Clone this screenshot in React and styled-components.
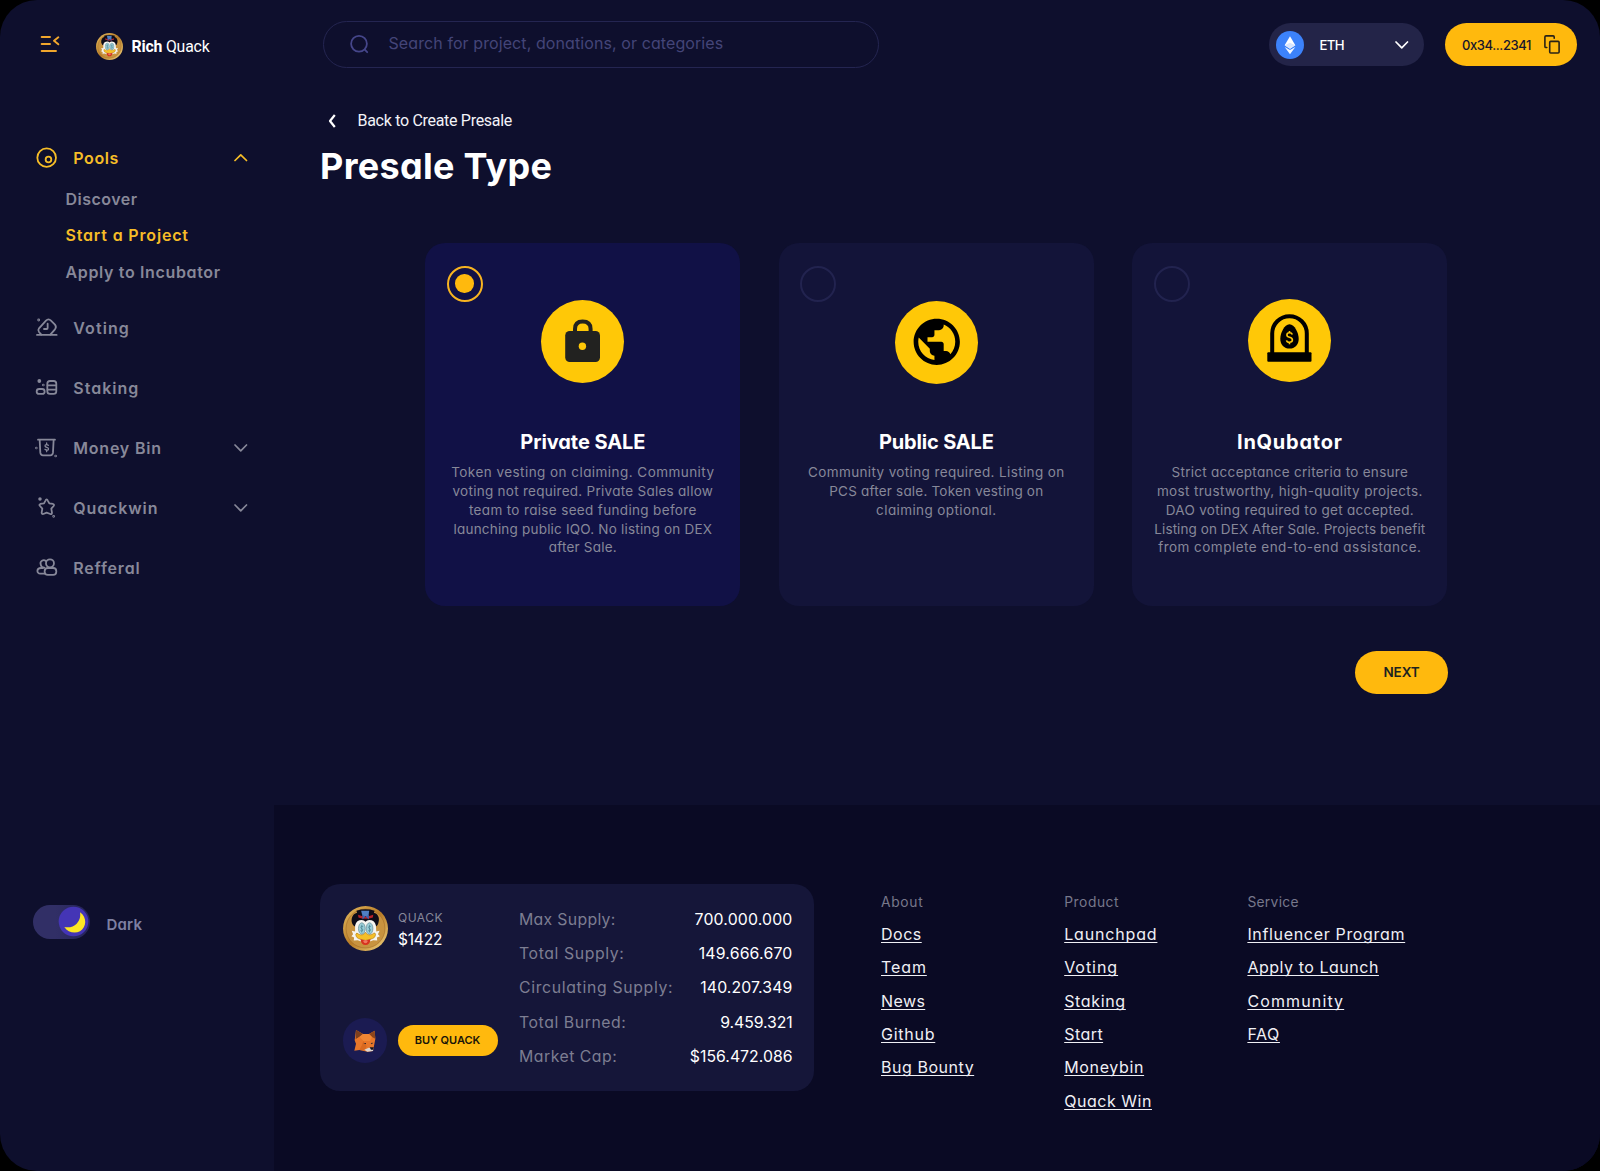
import React from "react";
import styled, { createGlobalStyle, css } from "styled-components";
import { MdPublic } from "react-icons/md";

const color = {
  page: "#0e0f2d",
  footer: "#0a0a24",
  card: "#131439",
  cardActive: "#111146",
  panel: "#151639",
  gold: "#ffb90d",
  badge: "#ffc807",
  navGold: "#f6bd27",
  muted: "#878899",
  line: "#242551",
};

const Global = createGlobalStyle`
  * { box-sizing: border-box; }
  body {
    margin: 0;
    background: #000;
    font-family: Inter, "Liberation Sans", sans-serif;
    font-feature-settings: "cv11";
  }
  svg { display: block; flex: none; }
`;

const tracked = css`
  letter-spacing: ${(p) => p.$track || 0}px;
  white-space: nowrap;
`;

const Page = styled.div`
  display: grid;
  grid-template-columns: 273.5px 1fr;
  width: 1600px;
  height: 1171px;
  overflow: hidden;
  border-radius: 37px;
  background: ${color.page};
`;

/* ---------- Sidebar ---------- */

const Sidebar = styled.aside`
  display: flex;
  flex-direction: column;
`;

const Brand = styled.div`
  display: flex;
  align-items: center;
  height: 92px;
  padding-left: 39px;
`;

const BrandLogo = styled.div`
  display: flex;
  align-items: center;
  gap: 9px;
  margin-left: 34.5px;
`;

const BrandName = styled.span`
  padding-top: 2px;
  font: 400 15.8px/20px Roboto, sans-serif;
  color: #fff;
  ${tracked}
  b { font-weight: 700; }
`;

const MenuIconBox = styled.div`
  margin-top: -4px;
`;

const Nav = styled.nav`
  display: flex;
  flex-direction: column;
  padding-top: 43.5px;
`;

const NavItem = styled.a`
  display: flex;
  align-items: center;
  height: ${(p) => (p.$open ? 44.5 : 60)}px;
  padding: 0 26px 0 35px;
  color: ${(p) => (p.$open ? color.navGold : color.muted)};
`;

const NavLabel = styled.span`
  flex: 1;
  margin-left: 15px;
  font-size: 16px;
  font-weight: 600;
  ${tracked}
`;

const SubMenu = styled.div`
  display: flex;
  flex-direction: column;
  padding: 0.5px 0 6.75px 65.5px;
`;

const SubItem = styled.a`
  font-size: 16px;
  font-weight: 600;
  line-height: 36.75px;
  color: ${(p) => (p.$active ? color.navGold : color.muted)};
  ${tracked}
`;

const ThemeRow = styled.div`
  display: flex;
  align-items: center;
  gap: 16.5px;
  margin-top: 307px;
  padding-left: 33px;
`;

const Toggle = styled.div`
  display: flex;
  align-items: center;
  justify-content: flex-end;
  width: 57px;
  height: 34px;
  padding-right: 1px;
  border-radius: 17px;
  background: linear-gradient(90deg, #312f66 40%, #24235a);
`;

const ThemeLabel = styled.span`
  padding-top: 6px;
  font-size: 15px;
  font-weight: 600;
  color: #7e80a2;
  ${tracked}
`;

/* ---------- Main ---------- */

const Main = styled.main`
  display: grid;
  grid-template-rows: 89px 715.5px 1fr;
  min-width: 0;
`;

const TopBar = styled.header`
  display: flex;
  align-items: center;
  padding: 0 23px 0 49.5px;
`;

const Search = styled.div`
  display: flex;
  align-items: center;
  width: 556px;
  height: 47px;
  padding: 0 0 1px 25.5px;
  border: 1px solid ${color.line};
  border-radius: 24px;
`;

const SearchHint = styled.span`
  margin-left: 20px;
  padding-bottom: 2px;
  font-size: 16px;
  color: #444578;
  ${tracked}
`;

const Network = styled.div`
  display: flex;
  align-items: center;
  width: 155px;
  height: 43px;
  margin-left: auto;
  padding: 0 15px 0 7px;
  border-radius: 22px;
  background: #232448;
  color: #fff;
`;

const NetworkName = styled.span`
  flex: 1;
  margin-left: 16px;
  padding-top: 1px;
  font-size: 13.2px;
  font-weight: 500;
  color: #fff;
  ${tracked}
`;

const Wallet = styled.div`
  display: flex;
  align-items: center;
  justify-content: space-between;
  width: 132px;
  height: 43px;
  margin-left: 21.500px;
  padding: 0 17px 0 17px;
  border-radius: 22px;
  background: ${color.gold};
  font-size: 13px;
  font-weight: 500;
  color: #17152c;
  ${tracked}
`;

const Content = styled.section`
  display: flex;
  flex-direction: column;
  padding: 20px 152px 0 46px;
`;

const BackLink = styled.a`
  display: flex;
  align-items: center;
  gap: 21.5px;
  height: 24px;
  padding-left: 8.5px;
  font: 400 16px/24px Roboto, sans-serif;
  color: #f3f3f8;
  ${tracked}
`;

const Title = styled.h1`
  margin: 11px 0 0 0.5px;
  font-size: 36px;
  font-weight: 700;
  line-height: 44px;
  color: #fff;
  ${tracked}
`;

const Cards = styled.div`
  display: grid;
  grid-template-columns: repeat(3, 315.3px);
  gap: 38.2px;
  margin: 55px 0 0 105.7px;
`;

const Card = styled.article`
  height: 363px;
  border-radius: 20px;
  background: ${(p) => (p.$active ? color.cardActive : color.card)};
`;

const CardTop = styled.div`
  display: grid;
  grid-template-columns: 1fr auto 1fr;
  align-items: start;
  height: 184px;
  padding: 0 22px;
`;

const Radio = styled.span`
  display: grid;
  place-items: center;
  width: 36px;
  height: 36px;
  margin: 22.500px 0 0 -0.5px;
  border: ${(p) => (p.$active ? "2.5px solid #f8b420" : "2px solid #22234f")};
  border-radius: 50%;

  &::after {
    content: "";
    width: 18.5px;
    height: 18.5px;
    border-radius: 50%;
    background: ${(p) => (p.$active ? color.gold : "transparent")};
  }
`;

const Badge = styled.div`
  display: grid;
  place-items: center;
  width: 83px;
  height: 83px;
  margin-top: ${(p) => p.$top}px;
  border-radius: 50%;
  background: ${color.badge};
  color: #000;
`;

const CardTitle = styled.h2`
  margin: 0;
  font-size: 20px;
  font-weight: 700;
  line-height: 30px;
  text-align: center;
  color: #fff;
  ${tracked}
`;

const CardText = styled.p`
  display: flex;
  flex-direction: column;
  align-items: center;
  margin: 6px 0 0;
  font-size: 13.5px;
  line-height: 18.85px;
  color: ${color.muted};
`;

const TextLine = styled.span`
  ${tracked}
`;

const NextButton = styled.button`
  align-self: flex-end;
  width: 93px;
  height: 43px;
  margin-top: 44.500px;
  padding: 0;
  border: 0;
  border-radius: 22px;
  background: ${color.gold};
  font: 600 13.5px Inter, sans-serif;
  color: #1c2320;
  ${tracked}
`;

/* ---------- Footer ---------- */

const Footer = styled.footer`
  display: flex;
  align-items: flex-start;
  padding: 79px 0 0 46.5px;
  background: ${color.footer};
`;

const TokenPanel = styled.div`
  display: flex;
  gap: 21.5px;
  width: 494px;
  height: 207.5px;
  padding: 19px 21.5px 0 22.500px;
  border-radius: 20px;
  background: ${color.panel};
`;

const TokenSide = styled.div`
  display: flex;
  flex-direction: column;
  justify-content: space-between;
  width: 155px;
  height: 160px;
  padding-top: 3px;
`;

const TokenRow = styled.div`
  display: flex;
  align-items: center;
  gap: 10.5px;
`;

const TokenInfo = styled.div`
  display: flex;
  flex-direction: column;
  padding-top: 1px;
  line-height: 22.6px;
`;

const TokenName = styled.span`
  font-size: 12px;
  color: ${color.muted};
  ${tracked}
`;

const TokenPrice = styled.span`
  font-size: 15.5px;
  color: #fff;
  ${tracked}
`;

const FoxCircle = styled.div`
  display: grid;
  place-items: center;
  width: 44.500px;
  height: 44.500px;
  border-radius: 50%;
  background: #1b1b52;
`;

const BuyButton = styled.button`
  width: 100px;
  height: 31px;
  padding: 0;
  border: 0;
  border-radius: 16px;
  background: ${color.gold};
  font: 600 11px Inter, sans-serif;
  color: #1a1508;
  ${tracked}
`;

const Stats = styled.dl`
  flex: 1;
  margin: 0;
`;

const StatRow = styled.div`
  display: flex;
  justify-content: space-between;
  font-size: 15.8px;
  line-height: 34.45px;
`;

const StatName = styled.dt`
  color: #7d7e92;
  ${tracked}
`;

const StatValue = styled.dd`
  margin: 0;
  color: #fff;
  ${tracked}
`;

const Columns = styled.div`
  display: grid;
  grid-template-columns: repeat(3, 183.2px);
  margin-left: 67px;
  padding-top: 6px;
`;

const Column = styled.div`
  display: flex;
  flex-direction: column;
  align-items: flex-start;
`;

const ColumnTitle = styled.h3`
  margin: 0 0 4.500px;
  font-size: 13.8px;
  font-weight: 400;
  line-height: 24px;
  color: #77788b;
  ${tracked}
`;

const FooterLink = styled.a`
  font-size: 16px;
  line-height: 33.35px;
  color: #f0f0f5;
  text-decoration: underline;
  text-decoration-thickness: 1px;
  text-decoration-skip-ink: none;
  text-underline-offset: 1.5px;
  ${tracked}
`;

/* ---------- Drawings ---------- */

const navIcons = {
  pools: (
    <>
      <circle cx="35" cy="35" r="28" />
      <circle cx="40.5" cy="40.5" r="8.5" />
    </>
  ),
  voting: (
    <>
      <path d="M19 56L12 48C9 44 9 41 12 37L33 14C38 9 43 9 48 14L60 26C64 31 64 35 60 40L46 56" />
      <path d="M38 23V36Q38 39 35 39H27" />
      <path d="M6 57H65" />
      <circle cx="11" cy="12" r="1.5" />
    </>
  ),
  staking: (
    <>
      <rect x="37" y="15" width="27" height="39" rx="8" />
      <path d="M38 28H63M38 41H63" />
      <rect x="5" y="39" width="24" height="15" rx="7.5" />
      <circle cx="13" cy="15" r="3" />
      <circle cx="25" cy="27" r="1.2" />
    </>
  ),
  moneybin: (
    <>
      <path d="M9 11H60M14 12L16 50Q17 58 24 58H46Q53 58 54 50L56 12" />
      <path d="M40 28Q35 24 31 27Q28 32 35 34Q42 36 40 41Q35 45 30 40M35 21V26M35 42V47" strokeWidth="3.8" />
      <circle cx="4" cy="36" r="1" />
      <circle cx="62" cy="60" r="1.2" />
    </>
  ),
  quackwin: (
    <>
      <path d="M35 10Q37 10 38 13L43 22L54 24Q59 26 56 30L49 38L51 50Q51 56 46 54L35 50L25 54Q20 55 20 50L22 38L15 30Q11 26 16 24L27 22L32 13Q33 10 35 10Z" />
      <circle cx="15" cy="9" r="2.6" />
      <circle cx="56" cy="61" r="1.4" />
    </>
  ),
  referral: (
    <>
      <path d="M33 15C25 9 14 15 17 25C18 31 22 35 28 35" />
      <circle cx="45" cy="22" r="12" />
      <rect x="29" y="36" width="35" height="21" rx="9.5" />
      <path d="M24 36H18C4 36 4 53 16 53H29" />
    </>
  ),
};

const NavIcon = ({ name }) => (
  <svg width="23.3" height="23.3" viewBox="0 0 70 70" fill="none" stroke="currentColor" strokeWidth="5.4" strokeLinecap="round" strokeLinejoin="round">
    {navIcons[name]}
  </svg>
);

const Chevron = ({ up }) => (
  <svg width="13.500" height="10" viewBox="0 0 13.5 10" fill="none" stroke="currentColor" strokeWidth="1.7" strokeLinecap="round" strokeLinejoin="round">
    <path d={up ? "M1 7.500L6.75 1.800L12.500 7.500" : "M1 2L6.75 7.800L12.500 2"} />
  </svg>
);

const MenuIcon = () => (
  <svg width="22" height="20" viewBox="0 0 66 60" fill="none" stroke="#f0a62c" strokeWidth="5.800" strokeLinecap="round" strokeLinejoin="round">
    <path d="M8 9H33M8 30H33M8 51H51M58 10L45 20.500L58 31" />
  </svg>
);

const SearchIcon = () => (
  <svg width="19" height="19" viewBox="0 0 19 19" fill="none" stroke="#45468a" strokeWidth="1.8" strokeLinecap="round">
    <circle cx="9" cy="8.8" r="7.9" />
    <path d="M14.8 14.7L17.2 17.2" />
  </svg>
);

const EthIcon = () => (
  <svg width="28" height="28" viewBox="0 0 84 84">
    <circle cx="42" cy="42" r="42" fill="#3c82fa" />
    <path d="M42 16L58 43L42 53L26 43Z" fill="#fff" />
    <path d="M42 35L58 43L42 53L26 43Z" fill="#d9e6fe" />
    <path d="M26 48L42 57L58 48L42 70Z" fill="#f2f7ff" />
  </svg>
);

const CopyIcon = () => (
  <svg width="16" height="19" viewBox="0 0 16 19" fill="none" stroke="#2a2316" strokeWidth="1.6" strokeLinecap="round" strokeLinejoin="round">
    <rect x="5.7" y="6.4" width="9.4" height="11.6" rx="1" />
    <path d="M10.2 3.2V2Q10.2 .9 9.1 .9H2Q.9 .9 .9 2V11.4Q.9 12.5 2 12.5H2.8" />
  </svg>
);

const BackIcon = () => (
  <svg width="8" height="14" viewBox="0 0 8 14" fill="none" stroke="#fff" strokeWidth="2.2" strokeLinejoin="round">
    <path d="M6.800 1L2 7L6.800 13" />
  </svg>
);

const LockIcon = () => (
  <svg width="83" height="83" viewBox="0 0 83 83">
    <rect x="24.2" y="31" width="34.8" height="31" rx="4.5" fill="#222220" />
    <path d="M34 32V29Q34 21.5 41.6 21.5Q49.6 21.5 49.6 29V32" fill="none" stroke="#222220" strokeWidth="4" />
    <circle cx="41.4" cy="46.2" r="3.7" fill="#ffc807" />
  </svg>
);

const IncubatorIcon = () => (
  <svg width="83" height="83" viewBox="0 0 83 83">
    <path d="M24.2 55V34.5A17.3 17.3 0 0 1 58.8 34.5V55" fill="none" stroke="#000" strokeWidth="4" />
    <rect x="19.3" y="53.3" width="44.2" height="9.4" rx="1" />
    <path d="M41.5 25.2C46.6 25.2 50.7 34 50.7 39.8C50.7 46 46.8 49.6 41.5 49.6C36.2 49.6 32.3 46 32.3 39.8C32.3 34 36.4 25.2 41.5 25.2Z" />
    <path d="M44.3 35.4Q43.8 33.8 41.5 33.8Q38.9 33.8 38.9 36Q38.9 37.7 41.5 38.3Q44.4 39 44.4 41Q44.4 43.2 41.5 43.2Q38.9 43.2 38.5 41.3M41.5 32V34M41.5 43V45.2" fill="none" stroke="#ffc807" strokeWidth="1.6" />
  </svg>
);

const MoonKnob = () => (
  <svg width="31" height="31" viewBox="0 0 93 93">
    <circle cx="46.5" cy="46.5" r="44.5" fill="#4435b6" />
    <path d="M66 19C88 34 86 64 66 76C50 84 29 79 19 63C34 66 47 62 56 53C66 43 68 31 66 19Z" fill="#fde725" />
  </svg>
);

const DuckCoin = ({ size, id }) => (
  <svg width={size} height={size} viewBox="0 0 134 134">
    <defs>
      <linearGradient id={id} x1="0" y1="0" x2="1" y2="1">
        <stop offset="0" stopColor="#e6bd62" />
        <stop offset=".5" stopColor="#b87c26" />
        <stop offset="1" stopColor="#f4d682" />
      </linearGradient>
    </defs>
    <circle cx="67" cy="67" r="67" fill={`url(#${id})`} />
    <circle cx="67" cy="67" r="58" fill="#c8933f" stroke="#9a6524" strokeWidth="1.500" />
    <path d="M26 48C24 32 32 22 42 20L40 14Q67 6 94 14L92 20C103 22 110 34 106 48Q104 62 93 62H41Q29 62 26 48Z" fill="#0d0c18" />
    <path d="M54 14H78L76 30H58Z" fill="#4f7fc4" />
    <path d="M45 26Q67 36 90 26L89 34Q67 42 46 34Z" fill="#b5232b" />
    <path d="M67 31L58 26V40ZM67 31L77 26V40Z" fill="#3f63ad" />
    <path d="M36 58Q40 42 56 42Q63 42 67 47Q71 42 78 42Q94 42 98 58L99 76L109 74L104 84L110 90L101 94L102 103L90 102L67 110L44 102L32 103L33 94L25 90L30 84L26 74L36 76Z" fill="#f6f5f0" />
    <ellipse cx="56" cy="67" rx="10" ry="17" fill="#9ccfd8" stroke="#5e8792" strokeWidth="2" />
    <ellipse cx="79" cy="67" rx="10" ry="17" fill="#9ccfd8" stroke="#5e8792" strokeWidth="2" />
    <path d="M60 61Q53 58 53 64Q54 67 57 68Q61 71 58 74Q55 76 52 73M56 56V79M83 61Q76 58 76 64Q77 67 80 68Q84 71 81 74Q78 76 75 73M79 56V79" fill="none" stroke="#3f7a88" strokeWidth="1.800" />
    <path d="M38 84Q40 77 47 84Q60 90 67 78Q74 90 87 84Q95 77 97 84Q97 96 82 99Q67 106 52 99Q38 96 38 84Z" fill="#f5bf27" stroke="#9a6710" strokeWidth="1.5" />
    <path d="M52 98Q67 105 82 98Q80 116 67 116Q54 116 52 98Z" fill="#d7331f" />
    <path d="M60 104Q67 99 74 104Q72 111 67 111Q62 111 60 104Z" fill="#f07860" />
  </svg>
);

const FoxIcon = () => (
  <svg width="22" height="23" viewBox="0 0 66 69">
    <path d="M6 3L27 15H45L62 5L64 30L61 46L57 66L40 68L16 63L1 65L6 44L2 34Z" fill="#e8772a" />
    <path d="M6 3L27 15L16 24L5 31Z" fill="#7d3f1c" />
    <path d="M62 5L45 15L54 24L64 29Z" fill="#8c451c" />
    <path d="M27 15H45L54 24L48 36H28L16 24Z" fill="#f08734" />
    <path d="M5 31L16 24L28 36L24 48L6 44Z" fill="#e8772a" />
    <path d="M24 48L28 36L38 52L32 64L16 63Z" fill="#d9691f" />
    <path d="M28 42L36 42L36 46Z" fill="#292732" />
    <path d="M50 42L58 41L53 46Z" fill="#292732" />
    <path d="M31 62L44 56L58 57L57 66L40 68Z" fill="#ddd4cf" />
    <path d="M47 55H59L58 62H51Z" fill="#17151f" />
  </svg>
);

/* ---------- Data ---------- */

const navItems = [
  { icon: "voting", label: "Voting", track: 1.08 },
  { icon: "staking", label: "Staking", track: 1 },
  { icon: "moneybin", label: "Money Bin", track: 0.78, more: true },
  { icon: "quackwin", label: "Quackwin", track: 0.88, more: true },
  { icon: "referral", label: "Refferal", track: 0.8 },
];

const saleTypes = [
  {
    title: "Private SALE", track: -0.06, active: true, top: 56.6, icon: <LockIcon />,
    lines: [
      ["Token vesting on claiming. Community", 0.45],
      ["voting not required. Private Sales allow", 0.27],
      ["team to raise seed funding before", 0.34],
      ["launching public IQO. No listing on DEX", 0.2],
      ["after Sale.", 0.2],
    ],
  },
  {
    title: "Public SALE", track: -0.17, top: 57.6, icon: <MdPublic size={55.5} />,
    lines: [
      ["Community voting required. Listing on", 0.37],
      ["PCS after sale. Token vesting on", 0.2],
      ["claiming optional.", 0.4],
    ],
  },
  {
    title: "InQubator", track: 0.75, top: 55.6, icon: <IncubatorIcon />,
    lines: [
      ["Strict acceptance criteria to ensure", 0.29],
      ["most trustworthy, high-quality projects.", 0.35],
      ["DAO voting required to get accepted.", 0.31],
      ["Listing on DEX After Sale. Projects benefit", 0.08],
      ["from complete end-to-end assistance.", 0.47],
    ],
  },
];

const stats = [
  ["Max Supply:", 0.32, "700.000.000", 0.18],
  ["Total Supply:", 0.6, "149.666.670", 0.2],
  ["Circulating Supply:", 0.67, "140.207.349", 0.12],
  ["Total Burned:", 0.57, "9.459.321", -0.1],
  ["Market Cap:", 0.5, "$156.472.086", 0.02],
];

const linkColumns = [
  { title: "About", track: 0.7, links: [["Docs", 0.5], ["Team", 0.9], ["News", 0.4], ["Github", 0.75], ["Bug Bounty", 0.54]] },
  { title: "Product", track: 0.55, links: [["Launchpad", 0.83], ["Voting", 0.95], ["Staking", 0.65], ["Start", 0.45], ["Moneybin", 0.65], ["Quack Win", 0.53]] },
  { title: "Service", track: 0.3, links: [["Influencer Program", 0.67], ["Apply to Launch", 0.53], ["Community", 1.13], ["FAQ", 0.6]] },
];

/* ---------- App ---------- */

export default function App() {
  return (
    <>
      <Global />
      <Page>
        <Sidebar>
          <Brand>
            <MenuIconBox><MenuIcon /></MenuIconBox>
            <BrandLogo>
              <DuckCoin size={27} id="coin-small" />
              <BrandName $track={-0.18}><b>Rich</b> Quack</BrandName>
            </BrandLogo>
          </Brand>
          <Nav>
            <NavItem $open>
              <NavIcon name="pools" />
              <NavLabel $track={0.58}>Pools</NavLabel>
              <Chevron up />
            </NavItem>
            <SubMenu>
              <SubItem $track={0.47}>Discover</SubItem>
              <SubItem $active $track={0.83}>Start a Project</SubItem>
              <SubItem $track={0.65}>Apply to Incubator</SubItem>
            </SubMenu>
            {navItems.map((item) => (
              <NavItem key={item.label}>
                <NavIcon name={item.icon} />
                <NavLabel $track={item.track}>{item.label}</NavLabel>
                {item.more && <Chevron />}
              </NavItem>
            ))}
          </Nav>
          <ThemeRow>
            <Toggle><MoonKnob /></Toggle>
            <ThemeLabel $track={0.19}>Dark</ThemeLabel>
          </ThemeRow>
        </Sidebar>

        <Main>
          <TopBar>
            <Search>
              <SearchIcon />
              <SearchHint $track={0.09}>Search for project, donations, or categories</SearchHint>
            </Search>
            <Network>
              <EthIcon />
              <NetworkName $track={-0.7}>ETH</NetworkName>
              <Chevron />
            </Network>
            <Wallet $track={-0.4}>
              0x34...2341
              <CopyIcon />
            </Wallet>
          </TopBar>

          <Content>
            <BackLink $track={-0.3}><BackIcon />Back to Create Presale</BackLink>
            <Title $track={0.3}>Presale Type</Title>
            <Cards>
              {saleTypes.map((type) => (
                <Card key={type.title} $active={type.active}>
                  <CardTop>
                    <Radio $active={type.active} />
                    <Badge $top={type.top}>{type.icon}</Badge>
                  </CardTop>
                  <CardTitle $track={type.track}>{type.title}</CardTitle>
                  <CardText>
                    {type.lines.map(([line, track]) => (
                      <TextLine key={line} $track={track}>{line}</TextLine>
                    ))}
                  </CardText>
                </Card>
              ))}
            </Cards>
            <NextButton $track={-0.1}>NEXT</NextButton>
          </Content>

          <Footer>
            <TokenPanel>
              <TokenSide>
                <TokenRow>
                  <DuckCoin size={45} id="coin-large" />
                  <TokenInfo>
                    <TokenName $track={0.48}>QUACK</TokenName>
                    <TokenPrice $track={-0.2}>$1422</TokenPrice>
                  </TokenInfo>
                </TokenRow>
                <TokenRow>
                  <FoxCircle><FoxIcon /></FoxCircle>
                  <BuyButton $track={-0.05}>BUY QUACK</BuyButton>
                </TokenRow>
              </TokenSide>
              <Stats>
                {stats.map(([name, nameTrack, value, valueTrack]) => (
                  <StatRow key={name}>
                    <StatName $track={nameTrack}>{name}</StatName>
                    <StatValue $track={valueTrack}>{value}</StatValue>
                  </StatRow>
                ))}
              </Stats>
            </TokenPanel>
            <Columns>
              {linkColumns.map((column) => (
                <Column key={column.title}>
                  <ColumnTitle $track={column.track}>{column.title}</ColumnTitle>
                  {column.links.map(([label, track]) => (
                    <FooterLink key={label} $track={track}>{label}</FooterLink>
                  ))}
                </Column>
              ))}
            </Columns>
          </Footer>
        </Main>
      </Page>
    </>
  );
}
